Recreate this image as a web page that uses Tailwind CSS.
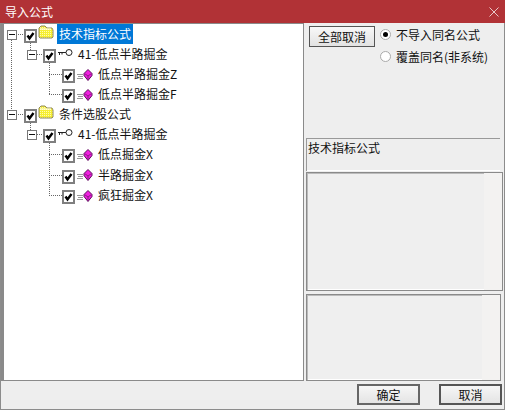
<!DOCTYPE html>
<html lang="zh-CN">
<head>
<meta charset="UTF-8">
<title>导入公式</title>
<script src="https://cdn.jsdelivr.net/npm/@tailwindcss/browser@4"></script>
</head>
<body class="w-[505px] h-[410px] overflow-hidden bg-[#eeeeee] text-[12px] text-[#111] font-['Noto_Sans_CJK_SC','Liberation_Sans',sans-serif]">
<div class="w-[505px] h-[410px] flex flex-col border-l border-b border-r border-[#8c8c8c]">
  <!-- title bar -->
  <div class="h-[23px] -mx-px flex items-center justify-between bg-[#b13236] pl-[5px] pr-[5px] text-white">
    <span class="leading-none">导入公式</span>
    <svg class="w-[10px] h-[10px] mr-[1px]" viewBox="0 0 10 10" stroke="#e8c8c8" fill="none"><path d="M0.5 0.5 9.5 9.5M9.5 0.5 0.5 9.5"/></svg>
  </div>

  <div class="flex h-[358px]">
    <!-- tree -->
    <div class="relative w-[303px] h-[358px] bg-white border-[#8a8a8a] border-l-[3px] border-t-[1px] border-r-[1px] border-b-[1px]">
      <!-- dotted connector lines -->
      <svg class="absolute left-0 top-0 w-[299px] h-[356px]" viewBox="0 0 299 356" fill="none" stroke="#666" stroke-dasharray="1 1">
        <path d="M7.500 14V90M12 10.500H20M26.500 19V26M26.500 99V106"/>
        <path d="M31 30.500H39M45.500 39V70M45 50.500H58M45 70.500H58"/>
        <path d="M12 90.500H20M31 110.500H39M45.500 119V171M45 130.500H58M45 151.500H58M45 171.500H58"/>
      </svg>

      <div class="relative flex flex-col">
        <!-- row 1 -->
        <div class="h-[20px] flex items-center pl-[3px]">
          <svg class="w-[10px] h-[10px] mt-[1px]" viewBox="0 0 10 10"><rect x=".5" y=".5" width="9" height="9" fill="#fff" stroke="#777"/><path d="M2 4.500H8" stroke="#111"/></svg>
          <svg class="w-[13px] h-[14px] ml-[7px] mt-[4px] shrink-0" viewBox="0 0 13 14"><rect x="1" y="1" width="11" height="12" fill="#fff" stroke="#7f7f7f" stroke-width="2"/><path d="M3.500 6.500 5.500 9.500 9.500 4" stroke="#000" stroke-width="2.400" fill="none"/></svg>
          <svg class="w-[16px] h-[14px] ml-[1px] -mt-[5px] shrink-0" viewBox="0 0 16 14"><defs><pattern id="dither" width="2" height="2" patternUnits="userSpaceOnUse"><rect width="2" height="2" fill="#f6ee30"/><rect width="1" height="1" fill="#fffbb0"/></pattern></defs><path d="M1 12V3L3 1H7L9 3H14L15 5V12L14 13H2Z" fill="url(#dither)" stroke="#8f8a5c"/><path d="M2 4H13" stroke="#fff"/></svg>
          <span class="ml-[3px] h-[20px] px-[2px] flex items-center bg-[#0078d7] text-white">技术指标公式</span>
        </div>
        <!-- row 2 -->
        <div class="h-[20px] flex items-center pl-[23px]">
          <svg class="w-[10px] h-[10px] mt-[1px]" viewBox="0 0 10 10"><rect x=".5" y=".5" width="9" height="9" fill="#fff" stroke="#777"/><path d="M2 4.500H8" stroke="#111"/></svg>
          <svg class="w-[13px] h-[14px] ml-[6px] mt-[4px] shrink-0" viewBox="0 0 13 14"><rect x="1" y="1" width="11" height="12" fill="#fff" stroke="#7f7f7f" stroke-width="2"/><path d="M3.500 6.500 5.500 9.500 9.500 4" stroke="#000" stroke-width="2.400" fill="none"/></svg>
          <svg class="w-[15px] h-[9px] ml-[2px] -mt-[3px] shrink-0" viewBox="0 0 15 9" fill="none" stroke="#222"><circle cx="11" cy="4.500" r="3"/><path d="M0 4.500H8M1.500 4.500V7M4 4.500V6.500"/></svg>
          <span class="ml-[5px]">41-低点半路掘金</span>
        </div>
        <!-- row 3 -->
        <div class="h-[20px] flex items-center pl-[58px]">
          <svg class="w-[13px] h-[14px] mt-[4px] shrink-0" viewBox="0 0 13 14"><rect x="1" y="1" width="11" height="12" fill="#fff" stroke="#7f7f7f" stroke-width="2"/><path d="M3.500 6.500 5.500 9.500 9.500 4" stroke="#000" stroke-width="2.400" fill="none"/></svg>
          <svg class="w-[16px] h-[12px] ml-[2px] mt-[1px] shrink-0" viewBox="0 0 16 12"><path d="M0 5.500H6M1 7.500H6M0 9.500H6" stroke="#999"/><path d="M11 .500 15 4.500V6.500L11 11.500 7 6.500V4.500Z" fill="#f01ee0" stroke="#5a1058"/><path d="M7.500 4.500 11 7 14.500 4.500M11 7V11" stroke="#8a1a84" fill="none"/></svg>
          <span class="ml-[5px]">低点半路掘金Z</span>
        </div>
        <!-- row 4 -->
        <div class="h-[20px] flex items-center pl-[58px]">
          <svg class="w-[13px] h-[14px] mt-[4px] shrink-0" viewBox="0 0 13 14"><rect x="1" y="1" width="11" height="12" fill="#fff" stroke="#7f7f7f" stroke-width="2"/><path d="M3.500 6.500 5.500 9.500 9.500 4" stroke="#000" stroke-width="2.400" fill="none"/></svg>
          <svg class="w-[16px] h-[12px] ml-[2px] mt-[1px] shrink-0" viewBox="0 0 16 12"><path d="M0 5.500H6M1 7.500H6M0 9.500H6" stroke="#999"/><path d="M11 .500 15 4.500V6.500L11 11.500 7 6.500V4.500Z" fill="#f01ee0" stroke="#5a1058"/><path d="M7.500 4.500 11 7 14.500 4.500M11 7V11" stroke="#8a1a84" fill="none"/></svg>
          <span class="ml-[5px]">低点半路掘金F</span>
        </div>
        <!-- row 5 -->
        <div class="h-[20px] flex items-center pl-[3px]">
          <svg class="w-[10px] h-[10px] mt-[1px]" viewBox="0 0 10 10"><rect x=".5" y=".5" width="9" height="9" fill="#fff" stroke="#777"/><path d="M2 4.500H8" stroke="#111"/></svg>
          <svg class="w-[13px] h-[14px] ml-[7px] mt-[4px] shrink-0" viewBox="0 0 13 14"><rect x="1" y="1" width="11" height="12" fill="#fff" stroke="#7f7f7f" stroke-width="2"/><path d="M3.500 6.500 5.500 9.500 9.500 4" stroke="#000" stroke-width="2.400" fill="none"/></svg>
          <svg class="w-[16px] h-[14px] ml-[1px] -mt-[5px] shrink-0" viewBox="0 0 16 14"><path d="M1 12V3L3 1H7L9 3H14L15 5V12L14 13H2Z" fill="url(#dither)" stroke="#8f8a5c"/><path d="M2 4H13" stroke="#fff"/></svg>
          <span class="ml-[3px] px-[2px]">条件选股公式</span>
        </div>
        <!-- row 6 -->
        <div class="h-[20px] flex items-center pl-[23px]">
          <svg class="w-[10px] h-[10px] mt-[1px]" viewBox="0 0 10 10"><rect x=".5" y=".5" width="9" height="9" fill="#fff" stroke="#777"/><path d="M2 4.500H8" stroke="#111"/></svg>
          <svg class="w-[13px] h-[14px] ml-[6px] mt-[4px] shrink-0" viewBox="0 0 13 14"><rect x="1" y="1" width="11" height="12" fill="#fff" stroke="#7f7f7f" stroke-width="2"/><path d="M3.500 6.500 5.500 9.500 9.500 4" stroke="#000" stroke-width="2.400" fill="none"/></svg>
          <svg class="w-[15px] h-[9px] ml-[2px] -mt-[3px] shrink-0" viewBox="0 0 15 9" fill="none" stroke="#222"><circle cx="11" cy="4.500" r="3"/><path d="M0 4.500H8M1.500 4.500V7M4 4.500V6.500"/></svg>
          <span class="ml-[5px]">41-低点半路掘金</span>
        </div>
        <!-- row 7 -->
        <div class="h-[20px] flex items-center pl-[58px]">
          <svg class="w-[13px] h-[14px] mt-[4px] shrink-0" viewBox="0 0 13 14"><rect x="1" y="1" width="11" height="12" fill="#fff" stroke="#7f7f7f" stroke-width="2"/><path d="M3.500 6.500 5.500 9.500 9.500 4" stroke="#000" stroke-width="2.400" fill="none"/></svg>
          <svg class="w-[16px] h-[12px] ml-[2px] mt-[1px] shrink-0" viewBox="0 0 16 12"><path d="M0 5.500H6M1 7.500H6M0 9.500H6" stroke="#999"/><path d="M11 .500 15 4.500V6.500L11 11.500 7 6.500V4.500Z" fill="#f01ee0" stroke="#5a1058"/><path d="M7.500 4.500 11 7 14.500 4.500M11 7V11" stroke="#8a1a84" fill="none"/></svg>
          <span class="ml-[5px]">低点掘金X</span>
        </div>
        <!-- row 8 -->
        <div class="h-[21px] flex items-center pl-[58px]">
          <svg class="w-[13px] h-[14px] mt-[4px] shrink-0" viewBox="0 0 13 14"><rect x="1" y="1" width="11" height="12" fill="#fff" stroke="#7f7f7f" stroke-width="2"/><path d="M3.500 6.500 5.500 9.500 9.500 4" stroke="#000" stroke-width="2.400" fill="none"/></svg>
          <svg class="w-[16px] h-[12px] ml-[2px] mt-[1px] shrink-0" viewBox="0 0 16 12"><path d="M0 5.500H6M1 7.500H6M0 9.500H6" stroke="#999"/><path d="M11 .500 15 4.500V6.500L11 11.500 7 6.500V4.500Z" fill="#f01ee0" stroke="#5a1058"/><path d="M7.500 4.500 11 7 14.500 4.500M11 7V11" stroke="#8a1a84" fill="none"/></svg>
          <span class="ml-[5px]">半路掘金X</span>
        </div>
        <!-- row 9 -->
        <div class="h-[20px] flex items-center pl-[58px]">
          <svg class="w-[13px] h-[14px] mt-[4px] shrink-0" viewBox="0 0 13 14"><rect x="1" y="1" width="11" height="12" fill="#fff" stroke="#7f7f7f" stroke-width="2"/><path d="M3.500 6.500 5.500 9.500 9.500 4" stroke="#000" stroke-width="2.400" fill="none"/></svg>
          <svg class="w-[16px] h-[12px] ml-[2px] mt-[1px] shrink-0" viewBox="0 0 16 12"><path d="M0 5.500H6M1 7.500H6M0 9.500H6" stroke="#999"/><path d="M11 .500 15 4.500V6.500L11 11.500 7 6.500V4.500Z" fill="#f01ee0" stroke="#5a1058"/><path d="M7.500 4.500 11 7 14.500 4.500M11 7V11" stroke="#8a1a84" fill="none"/></svg>
          <span class="ml-[5px]">疯狂掘金X</span>
        </div>
      </div>
    </div>

    <!-- right side -->
    <div class="flex-1 pl-[2px] flex flex-col">
      <div class="h-[115px] pt-[3px] pl-[3px] flex items-start">
        <button class="w-[66px] h-[21px] flex items-center justify-center border border-[#555] bg-gradient-to-b from-[#f8f8f8] to-[#e2e2e2]">全部取消</button>
        <div class="ml-[5px] flex flex-col gap-[5px]">
          <label class="h-[17px] flex items-center gap-[5px]">
            <span class="w-[11px] h-[11px] rounded-full bg-white border border-[#aaa] flex items-center justify-center"><span class="w-[5px] h-[5px] rounded-full bg-black"></span></span>
            不导入同名公式
          </label>
          <label class="h-[17px] flex items-center gap-[5px]">
            <span class="w-[11px] h-[11px] rounded-full bg-white border border-[#aaa]"></span>
            覆盖同名(非系统)
          </label>
        </div>
      </div>
      <div class="w-[194px] h-[33px] border-t border-l border-[#999] leading-[18px] pl-px bg-[#eeeeee] shadow-[inset_0_-1px_0_#fff]">技术指标公式</div>
      <div class="mt-[1px] w-[197px] h-[119px] border border-[#8a8a8a] shadow-[inset_1px_1px_0_#bbb,inset_-1px_-1px_0_#fff] bg-[#efefef] flex justify-end"><div class="w-[18px] bg-[#f3f2f1]"></div></div>
      <div class="mt-[3px] w-[195px] h-[87px] border border-[#8a8a8a] shadow-[inset_1px_1px_0_#bbb,inset_-1px_-1px_0_#fff] bg-[#efefef] flex justify-end"><div class="w-[18px] bg-[#f3f2f1]"></div></div>
    </div>
  </div>

  <!-- footer buttons -->
  <div class="flex-1 flex items-start justify-end gap-[19px] pt-[3px] pr-[2px]">
    <button class="w-[63px] h-[21px] flex items-center justify-center border-2 border-[#666] bg-gradient-to-b from-[#f6f6f6] to-[#e4e4e4]">确定</button>
    <button class="w-[63px] h-[21px] flex items-center justify-center border-2 border-[#555] bg-gradient-to-b from-[#f6f6f6] to-[#e4e4e4]">取消</button>
  </div>
</div>
</body>
</html>
